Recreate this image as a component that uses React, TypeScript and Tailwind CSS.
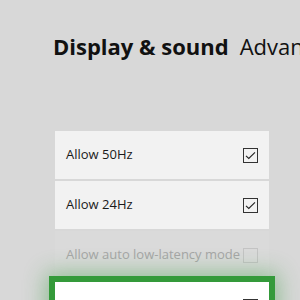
import React from "react";

function Box({ checked, disabled }: { checked?: boolean; disabled?: boolean }) {
  return (
    <div
      className={
        "w-[15px] h-[15px] border flex items-center justify-center " +
        (disabled ? "border-[#c4c4c4]" : "border-[#333333] border-[1.5px]")
      }
    >
      {checked && (
        <svg width="11" height="9" viewBox="0 0 11 9">
          <path d="M1 4.8 L3.8 7.5 L10 1.3" fill="none" stroke="#222" strokeWidth="1.1" />
        </svg>
      )}
    </div>
  );
}

function Row({ label, checked, disabled }: { label: string; checked?: boolean; disabled?: boolean }) {
  return (
    <div
      className={
        "h-[48px] flex items-center justify-between pl-[11px] pr-[11px] " +
        (disabled ? "bg-[#dadada]" : "bg-[#f2f2f2]")
      }
    >
      <span className={"text-[13px] " + (disabled ? "text-[#a6a6a6]" : "text-[#1a1a1a]")}>{label}</span>
      <Box checked={checked} disabled={disabled} />
    </div>
  );
}

export default function App() {
  return (
    <div
      className="w-[300px] h-[300px] bg-[#d8d8d8] overflow-hidden"
      style={{ fontFamily: '"Open Sans", "Noto Sans", sans-serif' }}
    >
      <div className="pt-[32px] pl-[53px] flex items-baseline whitespace-nowrap leading-[28px]">
        <span className="text-[22px] font-bold text-[#111]">Display &amp; sound</span>
        <span className="text-[22px] text-[#111] ml-[11px]">Advanced video modes</span>
      </div>
      <div className="mt-[71px] ml-[55px] w-[214px] flex flex-col gap-[2px]">
        <Row label="Allow 50Hz" checked />
        <Row label="Allow 24Hz" checked />
        <Row label="Allow auto low-latency mode" disabled />
        <div className="mt-[1px] h-[48px] bg-white flex items-center justify-between pl-[11px] pr-[11px] outline outline-[6px] outline-[#349a3a] shadow-[0_0_22px_9px_rgba(52,154,58,0.45)]">
          <span className="text-[13px] text-[#1a1a1a]">Allow variable refresh rate</span>
          <Box />
        </div>
      </div>
    </div>
  );
}
